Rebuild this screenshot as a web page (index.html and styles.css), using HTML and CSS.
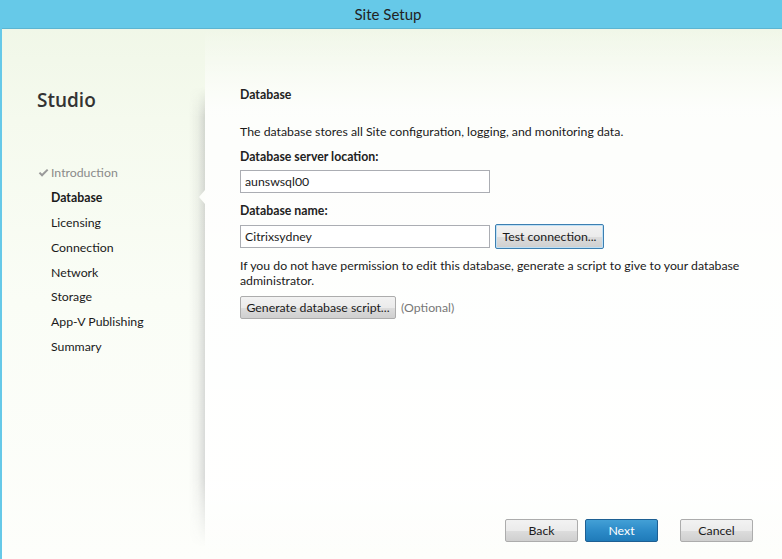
FILE: index.html
```html
<!DOCTYPE html>
<html lang="en">
<head>
<meta charset="utf-8">
<title>Site Setup</title>
<link rel="stylesheet" href="styles.css">
</head>
<body>
<div class="window">
  <header class="titlebar">Site Setup</header>
  <div class="frame">
    <aside class="sidebar">
      <h1 class="brand">Studio</h1>
      <ul class="steps">
        <li class="step done"><svg class="check" viewBox="0 0 12 10" width="11" height="10"><path d="M0.8 5.4 L2.4 3.9 L4.4 5.9 L9.8 0.6 L11.3 2.1 L4.4 9 Z" fill="#9a9a9a"/></svg>Introduction</li>
        <li class="step current">Database</li>
        <li class="step">Licensing</li>
        <li class="step">Connection</li>
        <li class="step">Network</li>
        <li class="step">Storage</li>
        <li class="step">App-V Publishing</li>
        <li class="step">Summary</li>
      </ul>
      <div class="divider-shadow"></div>
      <div class="pointer"></div>
    </aside>
    <main class="content">
      <h2 class="page-title">Database</h2>
      <p class="intro">The database stores all Site configuration, logging, and monitoring data.</p>
      <label class="field-label" for="server">Database server location:</label>
      <div class="field-row">
        <input class="textbox" id="server" type="text" value="aunswsql00">
      </div>
      <label class="field-label" for="dbname">Database name:</label>
      <div class="field-row">
        <input class="textbox" id="dbname" type="text" value="Citrixsydney">
        <button class="btn btn-focus" type="button">Test connection...</button>
      </div>
      <p class="note">If you do not have permission to edit this database, generate a script to give to your database administrator.</p>
      <div class="field-row script-row">
        <button class="btn btn-script" type="button">Generate database script...</button>
        <span class="optional">(Optional)</span>
      </div>
      <footer class="actions">
        <button class="btn btn-nav" type="button">Back</button>
        <button class="btn btn-nav btn-primary" type="button">Next</button>
        <button class="btn btn-nav btn-cancel" type="button">Cancel</button>
      </footer>
    </main>
  </div>
</div>
</body>
</html>
```

FILE: styles.css
```css
* { box-sizing: border-box; }

html, body {
  margin: 0;
  padding: 0;
}

body {
  width: 782px;
  height: 559px;
  overflow: hidden;
  font-family: "Lato", "Open Sans", sans-serif;
  font-size: 12.3px;
  color: #1a1a1a;
}

.window {
  width: 782px;
  height: 559px;
  display: flex;
  flex-direction: column;
  border-left: 2px solid #66c9e8;
  background: linear-gradient(180deg, #eff6e6 0px, #f5faee 120px, #fafdf6 300px, #fdfefb 559px);
}

.titlebar {
  height: 29px;
  flex: none;
  background: #66c9e8;
  border-bottom: 1px solid #5cb5d2;
  color: #222;
  font-size: 15px;
  line-height: 28px;
  text-align: center;
  padding-right: 8px;
}

.frame {
  flex: 1;
  display: flex;
  min-height: 0;
}

.sidebar {
  position: relative;
  width: 203px;
  flex: none;
  padding-left: 35px;
  padding-top: 58px;
}

.brand {
  margin: 0;
  font-family: "Open Sans", sans-serif;
  font-weight: 600;
  font-size: 19px;
  line-height: 26px;
  color: #333;
}

.steps {
  list-style: none;
  margin: 48px 0 0;
  padding: 0;
}

.step {
  position: relative;
  height: 24.9px;
  line-height: 24.9px;
  padding-left: 14px;
  color: #1a1a1a;
  white-space: nowrap;
}

.step.done {
  color: #8a8a8a;
}

.step.current {
  font-weight: 700;
}

.check {
  position: absolute;
  left: 1px;
  top: 7px;
}

.divider-shadow {
  position: absolute;
  right: 0;
  top: 58px;
  bottom: 12px;
  width: 16px;
  background: linear-gradient(90deg, rgba(0,0,0,0) 0%, rgba(60,60,70,0.06) 55%, rgba(60,60,70,0.18) 100%);
  -webkit-mask-image: linear-gradient(180deg, transparent 0px, #000 30px, #000 85%, transparent 100%);
  mask-image: linear-gradient(180deg, transparent 0px, #000 30px, #000 85%, transparent 100%);
}

.pointer {
  position: absolute;
  right: 0;
  top: 161px;
  width: 0;
  height: 0;
  border-top: 7px solid transparent;
  border-bottom: 7px solid transparent;
  border-right: 6px solid #fdfefb;
}

.content {
  flex: 1;
  position: relative;
  display: flex;
  flex-direction: column;
  align-items: flex-start;
  padding: 58px 0 0 35px;
  background: linear-gradient(180deg, rgba(255,255,255,0) 0px, rgba(255,255,255,0.8) 80px, rgba(255,255,255,0.9) 460px, rgba(255,255,255,0) 530px);
}

.page-title {
  margin: 0;
  font-size: 12.3px;
  font-weight: 700;
  line-height: 16px;
  color: #222;
}

.intro {
  margin: 21px 0 0;
  line-height: 16px;
}

.field-label {
  display: block;
  margin-top: 10px;
  font-weight: 700;
  line-height: 16px;
  color: #222;
}

.intro + .field-label {
  margin-top: 9px;
}

.field-row {
  display: flex;
  align-items: center;
  gap: 5px;
  margin-top: 5px;
}

.textbox {
  width: 250px;
  height: 23px;
  border: 1px solid #abadb3;
  background: #fff;
  font: inherit;
  color: #1a1a1a;
  padding: 0 4px;
  margin: 0;
  outline: none;
}

.btn {
  font: inherit;
  color: #1a1a1a;
  height: 23px;
  padding: 0 2px;
  border: 1px solid #acacac;
  border-radius: 2px;
  background: linear-gradient(180deg, #f2f2f2 0%, #ebebeb 50%, #dddddd 51%, #cfcfcf 100%);
  margin: 0;
  line-height: 21px;
  white-space: nowrap;
  cursor: default;
}

.btn-focus {
  width: 109px;
  height: 25px;
  border-color: #3c7fb1;
  box-shadow: inset 0 0 0 1px #bfe0f5;
}

.note {
  margin: 9px 0 0;
  width: 510px;
  line-height: 15px;
}

.script-row {
  margin-top: 8px;
}

.btn-script {
  width: 156px;
}

.optional {
  color: #777;
}

.actions {
  margin-top: auto;
  align-self: stretch;
  display: flex;
  gap: 7px;
  padding: 0 29px 17px 0;
  justify-content: flex-end;
}

.btn-nav {
  width: 73px;
  height: 23px;
}

.btn-primary {
  color: #fff;
  border-color: #1d5f93;
  background: linear-gradient(180deg, #43a0d6 0%, #2d8bc8 50%, #1f7bb9 100%);
}

.btn-cancel {
  margin-left: 15px;
}
```
